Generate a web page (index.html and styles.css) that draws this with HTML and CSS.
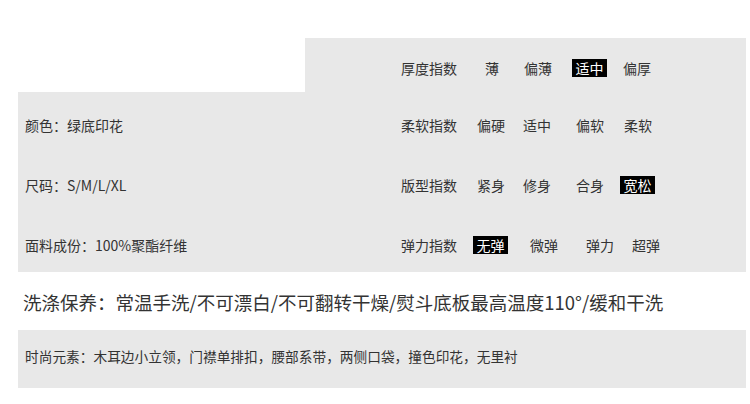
FILE: index.html
```html
<!DOCTYPE html>
<html lang="zh-CN">
<head>
    <meta charset="UTF-8">
    <meta name="viewport" content="width=device-width, initial-scale=1.0">
    <title>商品详情 - 尺码与面料</title>
    <link rel="stylesheet" href="styles.css">
</head>
<body>

    <!-- Product attributes table -->
    <div class="attr-table">
        <div class="cell blank"></div>
        <div class="cell scale">
            <span class="name">厚度指数</span>
            <span class="sp28">薄</span>
            <span class="sp25">偏薄</span>
            <span class="sp20 on">适中</span>
            <span class="sp16">偏厚</span>
        </div>

        <div class="cell info">颜色：绿底印花</div>
        <div class="cell scale">
            <span class="name">柔软指数</span>
            <span class="sp20">偏硬</span>
            <span class="sp18">适中</span>
            <span class="sp25">偏软</span>
            <span class="sp20">柔软</span>
        </div>

        <div class="cell info">尺码：S/M/L/XL</div>
        <div class="cell scale">
            <span class="name">版型指数</span>
            <span class="sp20">紧身</span>
            <span class="sp18">修身</span>
            <span class="sp25">合身</span>
            <span class="sp16 on">宽松</span>
        </div>

        <div class="cell info">面料成份：100%聚酯纤维</div>
        <div class="cell scale">
            <span class="name">弹力指数</span>
            <span class="sp16 on">无弹</span>
            <span class="sp22">微弹</span>
            <span class="sp28">弹力</span>
            <span class="sp18">超弹</span>
        </div>
    </div>

    <!-- Care line -->
    <p class="care">洗涤保养：常温手洗/不可漂白/不可翻转干燥/熨斗底板最高温度110°/缓和干洗</p>

    <!-- Style details -->
    <div class="details">时尚元素：木耳边小立领，门襟单排扣，腰部系带，两侧口袋，撞色印花，无里衬</div>

</body>
</html>
```

FILE: styles.css
```css
body {
    margin: 0;
    padding: 38px 0 0 18px;
    font-family: "Noto Sans CJK SC", "Noto Sans", sans-serif;
    color: #333333;
    background-color: #ffffff;
}

/* Attribute table */
.attr-table {
    width: 728px;
    display: grid;
    grid-template-columns: 287px 441px;
    grid-template-rows: 54px 60px 60px 60px;
    background-color: #e8e8e8;
}

.cell {
    display: flex;
    align-items: center;
    padding-top: 6px;
    box-sizing: border-box;
    font-size: 14px;
    line-height: 18px;
}

.cell.blank {
    background-color: #ffffff; /* cut-out corner above the colour row */
}

.info {
    padding-left: 7px;
}

.scale {
    padding-left: 96px;
}

/* Highlighted option */
.scale .on {
    background-color: #000000;
    color: #ffffff;
    padding: 0 3.5px;
}

.sp16 { margin-left: 16px; }
.sp18 { margin-left: 18px; }
.sp20 { margin-left: 20px; }
.sp22 { margin-left: 22px; }
.sp25 { margin-left: 25px; }
.sp28 { margin-left: 28px; }

/* Care line */
.care {
    margin: 0;
    width: 728px;
    height: 58px;
    display: flex;
    align-items: center;
    padding: 2px 0 0 5px;
    box-sizing: border-box;
    font-size: 18.5px;
}

/* Style details */
.details {
    width: 728px;
    height: 58px;
    display: flex;
    align-items: center;
    padding: 0 0 6px 7px;
    box-sizing: border-box;
    background-color: #e8e8e8;
    font-size: 13.7px;
}
```
